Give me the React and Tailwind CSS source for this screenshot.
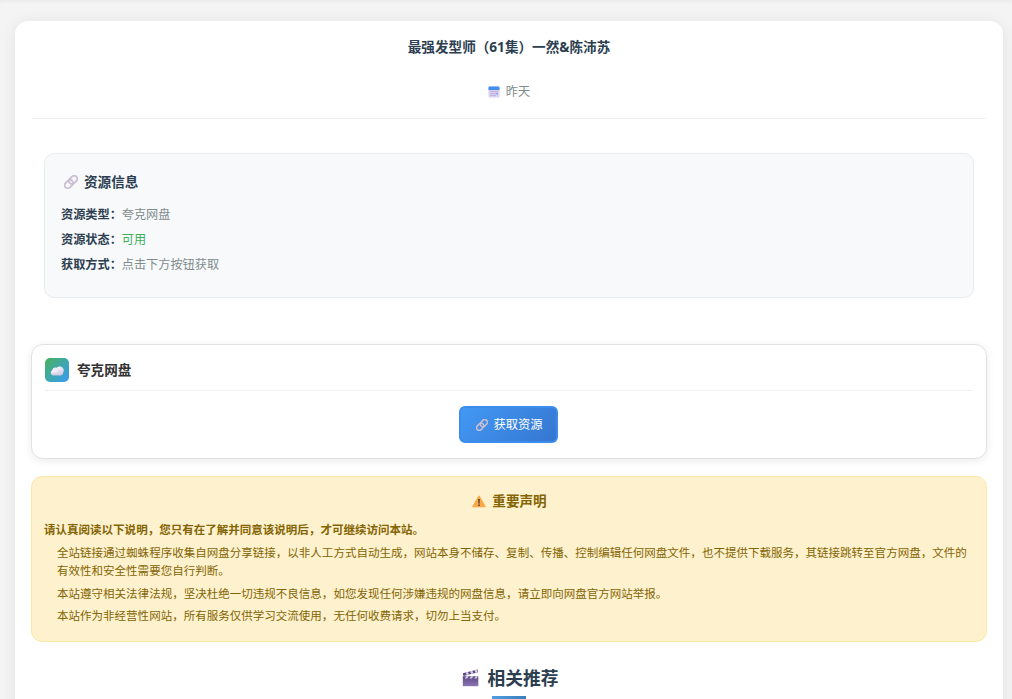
import React from 'react'

const infoRows = [
  { label: '资源类型：', value: '夸克网盘', color: 'text-[#7f8c8d]' },
  { label: '资源状态：', value: '可用', color: 'text-[#3fae5c]' },
  { label: '获取方式：', value: '点击下方按钮获取', color: 'text-[#7f8c8d]' },
]

const notices = [
  '全站链接通过蜘蛛程序收集自网盘分享链接，以非人工方式自动生成，网站本身不储存、复制、传播、控制编辑任何网盘文件，也不提供下载服务，其链接跳转至官方网盘，文件的有效性和安全性需要您自行判断。',
  '本站遵守相关法律法规，坚决杜绝一切违规不良信息，如您发现任何涉嫌违规的网盘信息，请立即向网盘官方网站举报。',
  '本站作为非经营性网站，所有服务仅供学习交流使用，无任何收费请求，切勿上当支付。',
]

function CalendarIcon() {
  return (
    <svg viewBox="0 0 12 12" className="h-3 w-3 shrink-0">
      <rect x="0.5" y="0.5" width="11" height="11" rx="1.2" fill="#dccff0" />
      <path d="M.5 4V1.7Q.5.5 1.700.5h8.6q1.2 0 1.2 1.2V4z" fill="#3f8ff0" />
      <path
        d="M2.500 5h1v1h-1zM4.500 5h1v1h-1zM6.500 5h1v1h-1zM8.500 5h1v1h-1zM2.500 7h1v1h-1zM4.500 7h1v1h-1zM6.500 7h1v1h-1zM2.500 9h1v1h-1zM4.500 9h1v1h-1zM6.500 9h1v1h-1z"
        fill="#a496cc"
      />
      <path d="M8.400 6.900h1.300v1.300H8.400z" fill="#3f8ff0" />
    </svg>
  )
}

function LinkIcon({ className, color }) {
  return (
    <svg viewBox="0 0 14 14" className={className} fill="none" stroke={color} strokeWidth="1.8">
      <g transform="rotate(-45 7 7)">
        <rect x="-0.6" y="3.9" width="9.2" height="6.2" rx="3.1" />
        <rect x="5.4" y="3.9" width="9.2" height="6.2" rx="3.1" />
      </g>
    </svg>
  )
}

function CloudIcon() {
  return (
    <svg viewBox="0 0 14 10" className="h-[10px] w-[14px]">
      <defs>
        <linearGradient id="cloud" x1="0" y1="0" x2="0.3" y2="1">
          <stop offset="0" stopColor="#ffffff" />
          <stop offset="1" stopColor="#cfc5e2" />
        </linearGradient>
      </defs>
      <circle cx="9.6" cy="4.6" r="4.2" fill="url(#cloud)" />
      <circle cx="5.3" cy="4.3" r="2.9" fill="#efeaf7" />
      <path d="M3 3.9a2.8 2.8 0 0 0 0 5.5h7.2a3 3 0 0 0 2.9-3q-4-.5-5 .2Q6 3.6 3 3.9z" fill="url(#cloud)" />
    </svg>
  )
}

function WarningIcon() {
  return (
    <svg viewBox="0 0 14 13" className="h-[13px] w-[14px] shrink-0">
      <path d="M6.300 1.100q.7-1.200 1.400 0l5.800 10q.5 1.200-.7 1.200H1.200Q0 12.300.5 11.100z" fill="#f9a94a" />
      <path d="M6.200 4h1.600l-.3 4.700h-1z" fill="#4b3b3b" />
      <circle cx="7" cy="10.200" r=".85" fill="#4b3b3b" />
    </svg>
  )
}

function ClapperIcon() {
  return (
    <svg viewBox="0 0 17 18" className="h-[18px] w-[17px] shrink-0">
      <defs>
        <linearGradient id="clapper" x1="0" y1="0" x2="0" y2="1">
          <stop offset="0" stopColor="#5b4982" />
          <stop offset="1" stopColor="#8b74b5" />
        </linearGradient>
      </defs>
      <path d="M.8 4.200 15.500.500l.7 2.800L1.500 7z" fill="#5b487f" />
      <path d="M3.500 3.500l2.300-.6 1.300 2.600-2.300.6zM8 2.400l2.300-.6 1.300 2.600-2.300.6zM12.400 1.300l2.200-.6 1.300 2.600-2.200.6z" fill="#d9cdee" />
      <path d="M.8 7.200h15.500v10H.8z" fill="url(#clapper)" />
      <path d="M4.300 7.200h2.400L5.200 9.600H2.800zM9 7.200h2.400L9.900 9.600H7.500zM13.700 7.200H16l-1.400 2.400h-2.400z" fill="#d9cdee" />
    </svg>
  )
}

export default function App() {
  return (
    <div className="h-[699px] overflow-hidden bg-[#f4f4f4] pl-[15px] pr-[9px] font-['Noto_Sans','Noto_Sans_CJK_SC',sans-serif] text-[#2c3e50] shadow-[inset_0_3px_4px_-2px_rgba(0,0,0,0.05)]">
      <div className="h-[21px]" />
      <main className="h-[760px] rounded-[13px] bg-white px-[17px] shadow-[0_2px_16px_rgba(0,0,0,0.08)]">
        <header className="flex h-[98px] flex-col items-center border-b border-[#eeeeee]">
          <h1 className="mt-4 text-[13.6px] leading-5 font-bold whitespace-nowrap">最强发型师（61集）一然&陈沛苏</h1>
          <div className="mt-[25px] flex items-center gap-[6px] text-[12.16px] leading-5 text-[#7f8c8d]">
            <CalendarIcon />
            <span>昨天</span>
          </div>
        </header>

        {/* 资源信息 */}
        <section className="mx-3 mt-[34px] h-[145px] rounded-[10px] border border-[#e9ecef] bg-[#f8f9fb] pr-[17px] pl-4 pt-[18px]">
          <h2 className="flex h-5 items-center gap-[6px] pl-[3px] text-[13.6px] leading-5 font-bold">
            <LinkIcon className="h-[14px] w-[14px]" color="#cbbfd6" />
            资源信息
          </h2>
          <div className="mt-[10px]">
            {infoRows.map((row) => (
              <p key={row.label} className="h-[25px] text-[12.16px] leading-[25px]">
                <strong className="font-bold">{row.label}</strong>
                <span className={row.color}>{row.value}</span>
              </p>
            ))}
          </div>
        </section>

        {/* 网盘卡片 */}
        <section className="-mx-px mt-[46px] h-[115px] rounded-[12px] border border-[#e2e2e2] bg-white px-[13px] shadow-[0_2px_8px_rgba(0,0,0,0.08)]">
          <div className="flex h-[46px] items-center gap-2 border-b border-[#f0f0f0] pt-1">
            <div className="flex h-6 w-6 items-center justify-center rounded-[5px] bg-linear-135 from-[#4caf50] to-[#3f98f5] pt-[3px]">
              <CloudIcon />
            </div>
            <h3 className="text-[13.6px] leading-5 font-bold text-[#333]">夸克网盘</h3>
          </div>
          <div className="flex justify-center pt-[15px] pr-px">
            <button className="flex h-[37px] w-[99px] items-center justify-center gap-[5px] rounded-[6px] border-2 border-[#3c8ceb] bg-linear-135 from-[#4299f5] to-[#3576d0] pl-[2px] text-[12.32px] text-white">
              <LinkIcon className="mt-px h-3 w-3" color="#c9bfd2" />
              <span className="pt-[2px]">获取资源</span>
            </button>
          </div>
        </section>

        {/* 重要声明 */}
        <section className="-mx-px mt-[17px] h-[166px] rounded-[11px] border border-[#fbe7a6] bg-[#fdf2cd] pr-[13px] pl-3 pt-[14px] text-[#856404]">
          <h3 className="flex h-5 items-center justify-center gap-[6px] pl-[2px] text-[13.6px] leading-5 font-bold">
            <WarningIcon />
            重要声明
          </h3>
          <p className="mt-[10px] text-[11.52px] leading-[18px] font-bold">请认真阅读以下说明，您只有在了解并同意该说明后，才可继续访问本站。</p>
          <ul className="mt-[5px] flex flex-col gap-[5px] pr-[5px] pl-[13px] text-[11.52px] leading-[17.8px]">
            {notices.map((text) => (
              <li key={text}>{text}</li>
            ))}
          </ul>
        </section>

        <section className="flex flex-col items-center pt-[22px]">
          <h2 className="flex h-7 items-center gap-2 pl-[3px] text-[17.76px] leading-7 font-bold">
            <ClapperIcon />
            相关推荐
          </h2>
          <div className="mt-1 h-[3px] w-[34px] bg-linear-to-r from-[#4f9fe2] to-[#3b7fbb]" />
        </section>
      </main>
    </div>
  )
}
